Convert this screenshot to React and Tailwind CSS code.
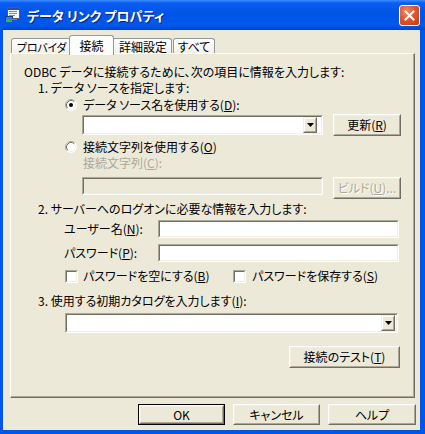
import React from "react";

function Raised({ className = "", children, def = false }) {
  const core = (
    <div className="flex h-full w-full border border-t-white border-l-white border-r-[#716F64] border-b-[#716F64]">
      <div className="flex h-full w-full items-center justify-center border border-t-[#F1EFE2] border-l-[#F1EFE2] border-r-[#ACA899] border-b-[#ACA899] bg-[#ECE9D8]">
        {children}
      </div>
    </div>
  );
  if (def) {
    return <div className={`flex border border-black ${className}`}>{core}</div>;
  }
  return <div className={`flex ${className}`}>{core}</div>;
}

function Sunken({ className = "", inner = "bg-white", children }) {
  return (
    <div className={`flex border border-t-[#ACA899] border-l-[#ACA899] border-r-white border-b-white ${className}`}>
      <div className={`flex h-full w-full items-center border border-t-[#716F64] border-l-[#716F64] border-r-[#F1EFE2] border-b-[#F1EFE2] ${inner}`}>
        {children}
      </div>
    </div>
  );
}

function DropBtn() {
  return (
    <div className="flex h-full w-[14px] border border-t-[#F1EFE2] border-l-[#F1EFE2] border-r-[#716F64] border-b-[#716F64]">
      <div className="flex h-full w-full items-center justify-center border border-t-white border-l-white border-r-[#ACA899] border-b-[#ACA899] bg-[#ECE9D8]">
        <svg width="7" height="4" viewBox="0 0 7 4">
          <path d="M0 0H7L3.5 4Z" fill="black" />
        </svg>
      </div>
    </div>
  );
}

function Radio({ checked }) {
  return (
    <svg width="12" height="12" viewBox="0 0 12 12" className="shrink-0">
      <circle cx="6" cy="6" r="5.5" fill="white" />
      <path d="M2.11 9.89A5.5 5.5 0 0 1 9.89 2.11" fill="none" stroke="#ACA899" />
      <path d="M9.89 2.11A5.5 5.5 0 0 1 2.11 9.89" fill="none" stroke="#FFFFFF" />
      <path d="M2.82 9.18A4.5 4.5 0 0 1 9.18 2.82" fill="none" stroke="#716F64" />
      <path d="M9.18 2.82A4.5 4.5 0 0 1 2.82 9.18" fill="none" stroke="#F1EFE2" />
      {checked && <circle cx="6" cy="6" r="2" fill="black" />}
    </svg>
  );
}

function Check() {
  return (
    <div className="flex h-[13px] w-[13px] shrink-0 border border-t-[#ACA899] border-l-[#ACA899] border-r-white border-b-white">
      <div className="h-full w-full border border-t-[#716F64] border-l-[#716F64] border-r-[#F1EFE2] border-b-[#F1EFE2] bg-white" />
    </div>
  );
}

function AppIcon() {
  return (
    <svg width="16" height="16" viewBox="0 0 16 16" className="shrink-0">
      <rect x="2.5" y="0.5" width="12" height="11" fill="#F4F4F4" stroke="#5A5A5A" />
      <rect x="3" y="1" width="11" height="2" fill="#2A4BB0" />
      <rect x="4" y="4" width="8" height="1" fill="#8A8A8A" />
      <rect x="4" y="6" width="8" height="1" fill="#8A8A8A" />
      <rect x="4" y="8" width="6" height="1" fill="#8A8A8A" />
      <rect x="0.5" y="9.5" width="7" height="4" fill="#3D7BE0" stroke="#1E3C8C" />
      <rect x="1" y="13" width="6" height="2" fill="#3DB83D" />
      <rect x="7" y="12" width="5" height="1" fill="#3DB83D" />
    </svg>
  );
}

function CloseBtn() {
  return (
    <div className="flex h-[21px] w-[21px] items-center justify-center rounded-[3px] border border-white bg-[radial-gradient(circle_at_35%_30%,#F08A68_0%,#E0572F_45%,#C13A15_100%)]">
      <svg width="11" height="11" viewBox="0 0 11 11">
        <path d="M1.5 1.5L9.5 9.5M9.5 1.5L1.5 9.5" stroke="white" strokeWidth="2" strokeLinecap="square" />
      </svg>
    </div>
  );
}

function Tab({ children, className = "" }) {
  return (
    <div className={`flex h-[16px] shrink-0 items-center whitespace-nowrap rounded-t-[3px] border border-b-0 border-[#919B9C] bg-[linear-gradient(#FFFFFF,#F1F0EA)] pt-[1px] ${className}`}>
      {children}
    </div>
  );
}

export default function App() {
  return (
    <div className="flex h-[434px] w-[425px] flex-col bg-[#0055EA] font-['Noto_Sans_CJK_JP',sans-serif] text-[12px] leading-none text-black [font-feature-settings:'palt']">
      {/* title bar */}
      <div className="flex h-[30px] shrink-0 items-center bg-[linear-gradient(180deg,#3B8CFF_0%,#0A5DF0_10%,#0054E6_45%,#0058EE_85%,#0043CF_100%)] pl-[5px] pr-[5px]">
        <AppIcon />
        <span className="ml-[6px] text-[13px] font-bold text-white [text-shadow:1px_1px_0_#0A1E7A]">
          データ リンク プロパティ
        </span>
        <div className="ml-auto">
          <CloseBtn />
        </div>
      </div>

      {/* body */}
      <div className="ml-[3px] mr-[5px] flex h-[400px] flex-col bg-[#ECE9D8] pl-[7px] pr-[5px] pt-[5px]">
        {/* tabs */}
        <div className="flex h-[19px] items-end pl-[1px]">
          <Tab className="w-[60px] justify-start pl-[5px] text-[11px] tracking-[-0.3px]">プロバイダ</Tab>
          <div className="relative z-10 -mx-[2px] -mb-px flex h-[20px] w-[45px] shrink-0 items-start justify-center whitespace-nowrap rounded-t-[3px] border border-b-0 border-[#919B9C] bg-[#FCFCFB] pt-[4px]">
            接続
          </div>
          <Tab className="w-[60px] justify-center pl-[2px]">詳細設定</Tab>
          <Tab className="ml-px w-[42px] justify-center">すべて</Tab>
        </div>

        {/* panel */}
        <div className="-mt-px flex h-[345px] flex-col border border-t-white border-l-white border-r-[#716F64] border-b-[#716F64] bg-[#ECE9D8] shadow-[inset_-1px_-1px_0_#ACA899]">
          <div className="mt-[10px] ml-[13px] flex h-[16px] items-center">
            ODBC データに接続するために、次の項目に情報を入力します:
          </div>
          <div className="ml-[27px] flex h-[16px] items-center">1. データ ソースを指定します:</div>
          <div className="mt-px ml-[54px] flex h-[16px] items-center">
            <Radio checked />
            <span className="ml-[6px]">
              データ ソース名を使用する(<u>D</u>):
            </span>
          </div>
          <div className="mt-px ml-[71px] flex h-[22px] items-center">
            <Sunken className="h-[20px] w-[241px]" inner="bg-white justify-end pr-[4px]">
              <DropBtn />
            </Sunken>
            <Raised className="ml-[10px] h-[22px] w-[68px]">
              更新(<u>R</u>)
            </Raised>
          </div>
          <div className="mt-[3px] ml-[54px] flex h-[16px] items-center">
            <Radio />
            <span className="ml-[6px]">
              接続文字列を使用する(<u>O</u>)
            </span>
          </div>
          <div className="ml-[72px] flex h-[16px] items-center text-[#ACA899]">
            接続文字列(<u>C</u>):
          </div>
          <div className="mt-[6px] ml-[71px] flex h-[22px] items-start">
            <Sunken className="h-[18px] w-[241px]" inner="bg-[#ECE9D8]" />
            <Raised className="ml-[10px] h-[22px] w-[68px]">
              <span className="text-[#ACA899] [text-shadow:1px_1px_0_#FFFFFF]">
                ビルド(<u>U</u>)...
              </span>
            </Raised>
          </div>
          <div className="mt-[2px] ml-[27px] flex h-[16px] items-center">
            2. サーバーへのログオンに必要な情報を入力します:
          </div>
          <div className="mt-[3px] ml-[53px] flex h-[18px] items-center">
            <span className="w-[94px]">
              ユーザー名(<u>N</u>):
            </span>
            <Sunken className="h-[18px] w-[241px]" />
          </div>
          <div className="mt-[6px] ml-[53px] flex h-[18px] items-center">
            <span className="w-[94px]">
              パスワード(<u>P</u>):
            </span>
            <Sunken className="h-[18px] w-[241px]" />
          </div>
          <div className="mt-[7px] ml-[54px] flex h-[14px] items-center">
            <div className="flex w-[168px] items-center">
              <Check />
              <span className="ml-[5px]">
                パスワードを空にする(<u>B</u>)
              </span>
            </div>
            <div className="flex items-center">
              <Check />
              <span className="ml-[6px]">
                パスワードを保存する(<u>S</u>)
              </span>
            </div>
          </div>
          <div className="mt-[10px] ml-[27px] flex h-[16px] items-center">
            3. 使用する初期カタログを入力します(<u>I</u>):
          </div>
          <div className="mt-[4px] ml-[54px] flex h-[20px] items-center">
            <Sunken className="h-[20px] w-[333px]" inner="bg-white justify-end pr-[1px]">
              <DropBtn />
            </Sunken>
          </div>
          <div className="mt-[13px] ml-[278px] flex h-[22px]">
            <Raised className="h-[22px] w-[111px]">
              接続のテスト(<u>T</u>)
            </Raised>
          </div>
        </div>

        {/* buttons */}
        <div className="-mr-px mt-[6px] flex h-[21px] justify-end gap-[8px]">
          <Raised def className="h-[21px] w-[87px]">
            OK
          </Raised>
          <Raised className="h-[21px] w-[87px]">キャンセル</Raised>
          <Raised className="h-[21px] w-[88px]">ヘルプ</Raised>
        </div>
      </div>
    </div>
  );
}
